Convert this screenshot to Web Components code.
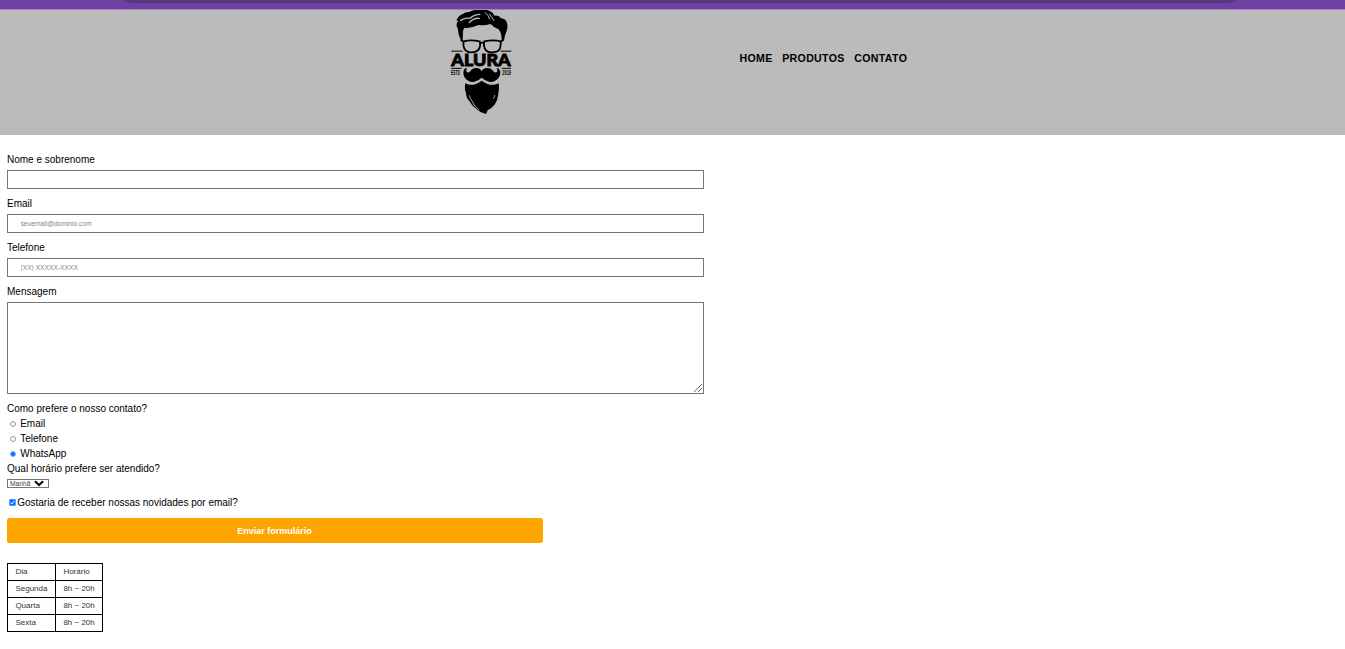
<!DOCTYPE html>
<html lang="pt-br">
<head>
<meta charset="utf-8">
<title>Contato - Barbearia Alura</title>
<style>
body{margin:0;background:#fff;color:#000;font:10px/15px "Liberation Sans",Arial,sans-serif}
</style>
</head>
<body>
<contact-page></contact-page>
<script>
const define=(name,html,setup)=>customElements.define(name,class extends HTMLElement{
  constructor(){super();this.attachShadow({mode:'open'}).innerHTML=html;}
  connectedCallback(){if(setup)setup(this,this.shadowRoot);}
});

define('browser-strip',`<style>
:host{display:flex;justify-content:center;height:10px;box-sizing:border-box;background:#6e41a2;border-bottom:1px solid #a183c5}
div{width:1112px;height:3px;background:#55377b;border-radius:0 0 8px 8px/0 0 3px 3px;margin-left:14px}
</style><div></div>`);

define('alura-logo',`<style>:host{display:block;width:84px;height:105px}svg{display:block}</style>
<svg width="84" height="105" viewBox="0 30 252 315" role="img" aria-label="Alura">
<path d="M57 107L53 84Q45 72 55 63L49 61Q55 46 70 41Q76 35 88 36Q100 29 122 28Q153 27 164 47Q177 45 183 55Q195 55 200 66Q205 79 200 92L195 106L192 122L185 121L184 106Q181 94 176 88Q160 82 152 72Q134 77 115 75Q91 86 74 83Q67 90 69 100L68 122L62 121Q61 112 57 107Z"/>
<g fill="none" stroke="#bababa" stroke-linecap="round">
<path stroke-width="4" d="M62 61Q78 52 90 55Q103 43 120 43M88 68Q101 53 118 55"/>
<path stroke-width="3" d="M136 38Q146 46 149 57M149 43Q157 54 162 62"/></g>
<g fill="none" stroke="#000" stroke-width="5.5">
<path d="M71 124Q92 118 119 124Q124 140 114 151Q105 158 91 157Q76 155 72 143Q69 134 71 124ZM133 124Q160 118 182 124Q184 150 170 155Q146 161 138 151Q129 140 133 124Z"/>
<path d="M119 130Q126 126 133 130M71 126L62 119M182 126L190 119"/></g>
<path d="M34 153.500H68M182 153.500H214M34 205H65M185 205H213" stroke="#000" stroke-width="3"/>
<text x="34" y="197" textLength="178" lengthAdjust="spacingAndGlyphs" font-family="Lato" font-weight="900" font-size="49" stroke="#000" stroke-width="2.6">ALURA</text>
<text x="33" y="225" textLength="27" lengthAdjust="spacingAndGlyphs" font-family="Liberation Sans" font-weight="700" font-size="19">ESTD</text>
<text x="187" y="225" textLength="26" lengthAdjust="spacingAndGlyphs" font-family="Liberation Sans" font-weight="700" font-size="19">2019</text>
<path d="M125 214Q120 204 109 204Q97 204 91 214Q84 221 79 214Q77 208 82 204Q71 204 70 217Q70 232 82 241Q91 248 103 245Q117 241 125 233Q133 241 147 245Q159 248 168 241Q181 232 181 217Q179 204 169 204Q174 208 172 214Q167 221 160 214Q153 204 142 204Q130 204 125 214Z"/>
<path d="M76 250Q92 258 108 252Q117 248 125 242Q133 248 142 252Q160 258 176 250Q179 263 175 280Q174 300 163 315Q153 327 143 331L138 342Q120 338 110 328Q96 319 90 306Q79 296 78 280Q72 263 76 250Z"/>
<path d="M88 286Q90 296 96 303Q103 322 117 329M164 285Q164 291 160 296" fill="none" stroke="#bababa" stroke-width="2.6"/>
</svg>`);

define('nav-link',`<style>:host{display:block}a{color:#000;text-decoration:none;font:bold 10.6px/14px "Liberation Sans",Arial,sans-serif;letter-spacing:.34px}</style><a href="#"><slot></slot></a>`);

define('site-header',`<style>
:host{display:flex;box-sizing:border-box;height:125px;background:#bbb;padding-left:440px;align-items:flex-start}
nav{display:flex;gap:9.5px;margin:41px 0 0 215.5px}
</style><alura-logo></alura-logo><nav><nav-link>HOME</nav-link><nav-link>PRODUTOS</nav-link><nav-link>CONTATO</nav-link></nav>`);

define('form-field',`<style>
:host{display:block;margin-bottom:7px}
label{display:block;margin-bottom:3px}
input,textarea{display:block;box-sizing:border-box;width:697px;height:19px;margin:0;padding:0 12.5px;border:1px solid #767676;border-radius:0;background:#fff;font:6.67px "Liberation Sans",Arial,sans-serif;outline:none}
textarea{height:92px;resize:none}
::placeholder{color:#858585}
.area{position:relative;width:697px}
svg{position:absolute;right:2px;bottom:2px}
</style><label><slot></slot></label><div class="area"></div>`,(el,root)=>{
  const area=root.querySelector('.area');
  if(el.hasAttribute('multiline')){
    area.innerHTML='<textarea></textarea><svg width="8" height="8" viewBox="0 0 8 8" stroke="#555" stroke-width=".9"><path d="M0 8L8 0M4 8L8 4"/></svg>';
  }else{
    const input=document.createElement('input');
    input.placeholder=el.getAttribute('placeholder')||'';
    area.append(input);
  }
});

define('radio-option',`<style>
:host{display:flex;align-items:center;height:15px;padding-left:3px}
i{box-sizing:border-box;width:6px;height:6px;border:1px solid #999;border-radius:50%;margin:1px 4.2px 0 0}
:host([checked]) i{border-color:#7db4f7;background:#0a6ff0}
</style><i></i><span><slot></slot></span>`);

define('mini-select',`<style>
:host{display:flex;box-sizing:border-box;align-items:center;width:42px;height:9px;border:1px solid #767676;padding-left:2px;font-size:6.67px;line-height:7px;color:#444}
svg{margin-left:4px}
</style><span><slot></slot></span><svg width="10" height="7" viewBox="0 0 10 7"><path d="M1 1.2L5 5L9 1.2" fill="none" stroke="#000" stroke-width="2"/></svg>`);

define('check-option',`<style>
:host{display:flex;align-items:center;height:15px;padding-left:2px}
svg{margin:0 1.2px 0 0}
</style><svg width="7" height="7" viewBox="0 0 7 7"><rect x=".3" y=".3" width="6.4" height="6.4" rx="1" fill="#0075ff"/><path d="M1.500 3.6L2.9 5L5.500 1.9" fill="none" stroke="#fff"/></svg><span><slot></slot></span>`);

define('submit-button',`<style>
:host{display:block}
button{display:block;width:536px;height:25px;margin:0;padding:0 1px 0 0;border:0;border-radius:2.5px;background:orange;color:#fff;font:bold 9px "Liberation Sans",Arial,sans-serif}
</style><button type="button"><slot></slot></button>`);

define('hours-table',`<style>
:host{display:block}
table{border-collapse:collapse;table-layout:fixed;width:96px;font-size:8px;line-height:10px;color:#333}
col:first-child{width:48px}
td{box-sizing:border-box;height:17px;border:1px solid #000;padding:0 0 0 7.4px;white-space:nowrap}
</style><table><colgroup><col><col></colgroup><tbody></tbody></table>`,(el,root)=>{
  root.querySelector('tbody').innerHTML=[['Dia','Horário'],['Segunda','8h ~ 20h'],['Quarta','8h ~ 20h'],['Sexta','8h ~ 20h']]
    .map(r=>'<tr>'+r.map(c=>`<td>${c}</td>`).join('')+'</tr>').join('');
});

define('contact-page',`<style>
:host{display:block;height:649px;overflow:hidden}
main{padding:17px 0 0 7px}
p{margin:0}
mini-select{margin:3px 0 7px}
submit-button{margin:8px 0 20px}
</style>
<browser-strip></browser-strip><site-header></site-header>
<main>
<form-field>Nome e sobrenome</form-field>
<form-field placeholder="seuemail@dominio.com">Email</form-field>
<form-field placeholder="(XX) XXXXX-XXXX">Telefone</form-field>
<form-field multiline>Mensagem</form-field>
<p>Como prefere o nosso contato?</p>
<radio-option>Email</radio-option><radio-option>Telefone</radio-option><radio-option checked>WhatsApp</radio-option>
<p>Qual horário prefere ser atendido?</p>
<mini-select>Manhã</mini-select>
<check-option>Gostaria de receber nossas novidades por email?</check-option>
<submit-button>Enviar formulário</submit-button>
<hours-table></hours-table>
</main>`);
</script>
</body>
</html>
